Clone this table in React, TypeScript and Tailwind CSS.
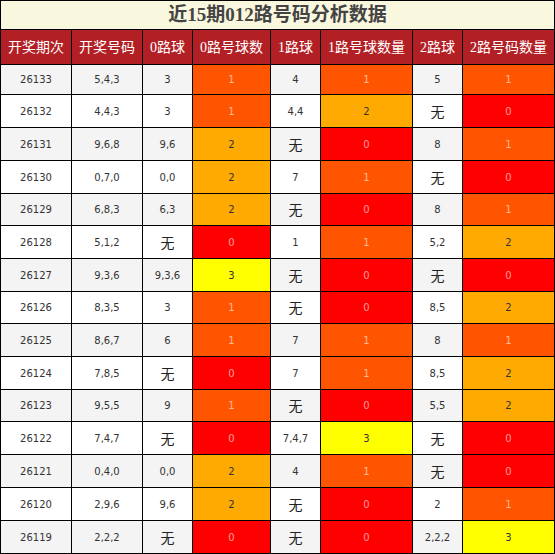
const rows: [string, string, string, number, string, number, string, number][] = [
  ["26133", "5,4,3", "3", 1, "4", 1, "5", 1],
  ["26132", "4,4,3", "3", 1, "4,4", 2, "无", 0],
  ["26131", "9,6,8", "9,6", 2, "无", 0, "8", 1],
  ["26130", "0,7,0", "0,0", 2, "7", 1, "无", 0],
  ["26129", "6,8,3", "6,3", 2, "无", 0, "8", 1],
  ["26128", "5,1,2", "无", 0, "1", 1, "5,2", 2],
  ["26127", "9,3,6", "9,3,6", 3, "无", 0, "无", 0],
  ["26126", "8,3,5", "3", 1, "无", 0, "8,5", 2],
  ["26125", "8,6,7", "6", 1, "7", 1, "8", 1],
  ["26124", "7,8,5", "无", 0, "7", 1, "8,5", 2],
  ["26123", "9,5,5", "9", 1, "无", 0, "5,5", 2],
  ["26122", "7,4,7", "无", 0, "7,4,7", 3, "无", 0],
  ["26121", "0,4,0", "0,0", 2, "4", 1, "无", 0],
  ["26120", "2,9,6", "9,6", 2, "无", 0, "2", 1],
  ["26119", "2,2,2", "无", 0, "无", 0, "2,2,2", 3],
];

const heights = ["h-[30px]", "h-[33px]", "h-[33px]", "h-[33px]", "h-[32px]", "h-[33px]", "h-[33px]", "h-[32px]", "h-[33px]", "h-[33px]", "h-[32px]", "h-[33px]", "h-[33px]", "h-[33px]", "h-[33px]"];

const cols = "grid grid-cols-[71px_71px_50px_78px_50px_92px_50px_92px]";
const headers = ["开奖期次", "开奖号码", "0路球", "0路号球数", "1路球", "1路号球数量", "2路球", "2路号码数量"];

function countCls(n: number) {
  if (n === 0) return "bg-[#ff0000] text-white/60";
  if (n === 1) return "bg-[#ff5500] text-white/60";
  if (n === 2) return "bg-[#ffaa00] text-[#333]";
  return "bg-[#ffff00] text-[#333]";
}

function Plain({ v }: { v: string }) {
  return (
    <div className="flex items-center justify-center border-r border-b border-black">
      {v === "无" ? (
        <span className="text-[14px] text-[#222] [font-family:'Noto_Sans_CJK_SC',sans-serif]">无</span>
      ) : (
        <span>{v}</span>
      )}
    </div>
  );
}

function Count({ n }: { n: number }) {
  return (
    <div className={`flex items-center justify-center border-r border-b border-black ${countCls(n)}`}>
      {n}
    </div>
  );
}

export default function App() {
  return (
    <div className="w-[555px] border-l border-t border-black bg-white [font-family:'DejaVu_Sans',sans-serif] text-[10px] text-[#333]">
      <div className="flex h-[29px] items-center justify-center border-r border-b border-black bg-[#f9f7de] text-[19px] font-bold text-[#444] [font-family:'Liberation_Serif','Noto_Sans_CJK_SC',serif]">
        近15期012路号码分析数据
      </div>
      <div className={`${cols} h-[35px] bg-[#b22025] text-[14px] text-white [font-family:'Liberation_Serif','Noto_Sans_CJK_SC',serif]`}>
        {headers.map((h) => (
          <div key={h} className="flex items-center justify-center border-r border-b border-black">
            {h}
          </div>
        ))}
      </div>
      {rows.map((r, i) => (
        <div key={r[0]} className={`${cols} ${heights[i]} ${i % 2 === 0 ? "bg-[#f4f4f4]" : "bg-white"}`}>
          <Plain v={r[0]} />
          <Plain v={r[1]} />
          <Plain v={r[2]} />
          <Count n={r[3]} />
          <Plain v={r[4]} />
          <Count n={r[5]} />
          <Plain v={r[6]} />
          <Count n={r[7]} />
        </div>
      ))}
    </div>
  );
}
